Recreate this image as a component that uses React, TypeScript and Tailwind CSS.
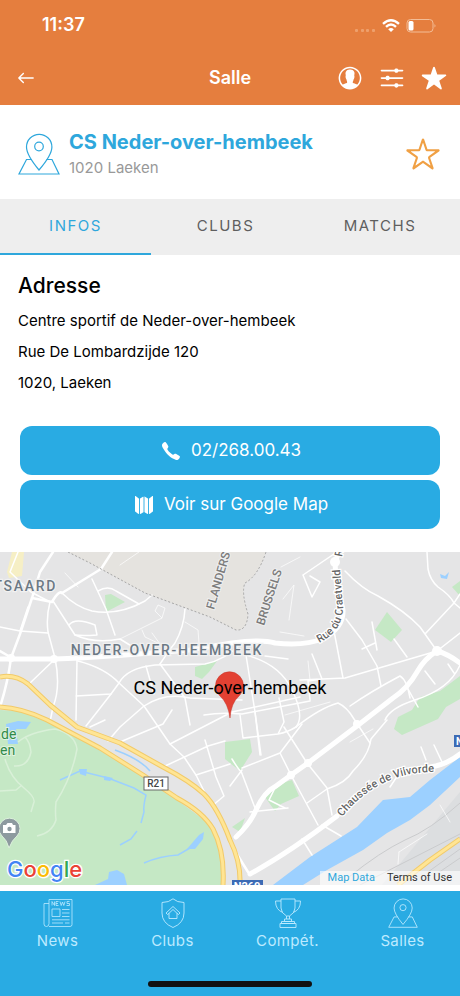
import { useState } from 'react'
import clsx from 'clsx'
import {
  IoIosArrowRoundBack,
  IoIosCall,
  IoIosContact,
  IoIosMap,
  IoIosOptions,
  IoIosStar,
  IoIosStarOutline,
} from 'react-icons/io'

const tabs = ['INFOS', 'CLUBS', 'MATCHS']

const addressLines = ['Centre sportif de Neder-over-hembeek', 'Rue De Lombardzijde 120', '1020, Laeken']

const navItems = [
  { label: 'News', icon: NewsIcon },
  { label: 'Clubs', icon: ShieldIcon },
  { label: 'Compét.', icon: TrophyIcon },
  { label: 'Salles', icon: VenueIcon },
]

// Map roads, grouped by stroke width
const mainRoads = [
  'M0 107 L55 107 L80 106 L125 103 L190 98 L232 91 Q262 87 275 91 Q305 94 322 87 Q344 76 343 58 L336 28 L335 10 L339 0',
  'M236 285 Q250 272 256 258 Q264 240 276 234 L291 223 L308 211 L357 174 L393 146 Q408 136 417 120 Q425 106 437 99 Q448 102 460 111',
  'M250 322 Q290 300 337 264 M430 215 Q446 213 460 202',
]

const mediumRoads = [
  'M62 41 L101 17 L112 0',
  'M230 291 L248 320',
  'M0 155 Q8 130 11 106 L20 82 L32 46 L40 20 L53 0',
  'M12 106 L0 99 M32 46 L52 50 Q59 38 62 41',
]

const smallRoads = [
  'M18 0 L10 20 L31 40 L50 50 Q46 65 48 80 Q52 95 55 106 Q61 135 53 155 L50 170',
  'M53 49 L75 83 Q95 92 120 87 L133 95',
  'M62 41 Q76 55 92 59 Q118 64 145 49 L152 43',
  'M92 27 L106 57 L115 83 M98 39 Q108 33 116 39 L139 52',
  'M0 75 L20 79 L48 81 M20 79 L28 55',
  'M69 73 Q75 65 95 73 L97 83 Q82 84 75 83',
  'M54 108 L30 131',
  'M77 108 L76 168 M76 144 L111 142 L119 131 Q127 116 155 113 L205 112 Q225 108 242 91',
  'M78 109 Q105 116 119 131 L144 154 L170 192 L184 205 L196 223 L211 253',
  'M146 114 L154 142 M160 112 L185 146 L190 173',
  'M111 142 L97 160 L86 174 M144 154 Q165 140 190 146 L242 148 M144 154 L120 175 L108 189',
  'M160 112 Q170 97 175 91 Q184 75 185 57',
  'M204 163 Q221 160 242 162 L310 149 M170 192 L232 160 L300 145',
  'M246 103 L255 160 L260 203 M246 103 Q280 112 292 138 Q305 164 296 175',
  'M265 104 L288 107 M312 102 L322 127 L308 129 L310 148 M300 128 L345 126 L437 99',
  'M334 79 L343 126 M346 67 L362 88 L377 114 L381 134',
  'M362 97 L375 91 M372 70 L377 98 M394 87 L407 105',
  'M345 19 Q362 37 378 44 Q405 59 420 75 L437 99 L460 81 M425 82 L454 51 L460 42',
  'M427 0 L428 17 Q430 28 438 35 Q450 43 454 51 L460 56',
  'M337 0 L303 23 M303 23 L312 45 L320 30 L310 24',
  'M350 154 Q370 140 400 124 Q407 128 410 146',
  'M408 137 L418 155 M385 168 Q390 156 415 148 Q450 137 460 113 M425 119 L435 132 M448 112 L454 121',
  'M296 175 Q320 156 338 151 Q347 155 354 167 L370 191',
  'M240 163 L243 186 L278 182 Q288 180 296 175 M278 182 L284 170 L279 146',
  'M255 160 L261 203 M242 216 L280 201 L302 172 M280 201 L291 223 L318 273',
  'M284 175 L307 211 L327 236 L332 263',
  'M307 251 L327 237 Q346 231 353 219 Q369 203 371 187 L387 168',
  'M232 207 Q240 220 241 219 L255 256 M230 234 L242 218',
  'M163 215 L208 194 L225 189 M196 223 L230 212 M205 188 L216 225 L224 244 L212 254',
  'M120 190 L163 172 L172 158 M90 175 L105 168',
  'M276 234 L269 248 L285 256 M322 273 L341 284 M302 287 L312 303',
  'M250 260 L288 256 M390 235 L400 220 M421 195 L426 208 M434 193 L442 210',
]

// thin paths inside the park and around the estates
const footpaths = [
  'M65 21 L78 35 M120 13 L139 0 M120 87 L162 66 L155 59 L158 53 L165 56 L162 66 M152 81 L160 92 L145 85 L142 78',
  'M185 70 L198 78 L199 91 M281 15 L300 5 M283 47 L294 33 L289 68 M280 80 L304 84',
  'M308 109 L310 128 M285 163 L330 150 M350 190 L373 177 M440 253 L450 270 M399 300 L398 312 M399 300 L427 282',
]

function VenueIcon({ className }: { className?: string }) {
  return (
    <svg viewBox="0 0 42 42" fill="none" stroke="currentColor" strokeWidth="1.2" className={className} aria-hidden="true">
      <path d="M21 37 Q8.500 22 8.500 14 A12.700 12.700 0 0 1 33.900 14 Q33.900 22 21 37 Z" />
      <circle cx="21" cy="13.500" r="4.300" />
      <path d="M13.500 26.500 H8.500 L1 41 H41 L34 26.500 H28.500" />
    </svg>
  )
}

function NewsIcon({ className }: { className?: string }) {
  return (
    <svg viewBox="0 0 30 30" fill="none" stroke="currentColor" strokeWidth="0.8" className={className} aria-hidden="true">
      <path d="M6 28.500 H27 Q29 28.500 29 26.500 V1.500 H6 V25.500 Q6 28.500 3.500 28.500 Q1 28.500 1 26 V5.500 H6" />
      <path d="M9 7.500 V3.500 L11.500 7.500 V3.500 M15.500 3.500 H13 V7.500 H15.500 M13 5.500 H15 M17 3.500 L18.200 7.500 L19.500 4 L20.800 7.500 L22 3.500 M26.500 3.500 H24 V5.500 H26.500 V7.500 H23.500" />
      <path d="M9 11 H17 V18.500 H9 Z M19 11.500 H26.500 M19 15 H26.500 M19 18.500 H26.500 M9 21.800 H26.500 M9 25 H20 M22 25 H26.500" />
    </svg>
  )
}

function ShieldIcon({ className }: { className?: string }) {
  return (
    <svg viewBox="0 0 30 30" fill="none" stroke="currentColor" strokeWidth="0.9" className={className} aria-hidden="true">
      <path d="M15 0.800 Q19 4.500 26 4.500 V15 Q26 25 15 29.500 Q4 25 4 15 V4.500 Q11 4.500 15 0.800 Z" />
      <path d="M15 8.500 L22 15 L20.500 16.500 L19 15.300 V20.500 H11 V15.300 L9.500 16.500 L8 15 Z M11 15.300 L15 11.500 L19 15.300" />
    </svg>
  )
}

function TrophyIcon({ className }: { className?: string }) {
  return (
    <svg viewBox="0 0 30 30" fill="none" stroke="currentColor" strokeWidth="0.9" className={className} aria-hidden="true">
      <path d="M8 1 H22 V10 Q22 15 16.500 18 H13.500 Q8 15 8 10 Z" />
      <path d="M8 3 H2.500 Q2.500 12 10 14.500 M22 3 H27.500 Q27.500 12 20 14.500" />
      <path d="M13.500 18 V21 M16.500 18 V21 M11.500 21 H18.500 V23.500 H11.500 Z M8.500 23.500 H21.500 V25.500 H8.500 Z M7 25.500 H23 V29.500 H7 Z" />
    </svg>
  )
}

function StatusIcons() {
  return (
    <svg viewBox="0 0 84 16" className="h-4 w-[84px]" aria-hidden="true">
      <g fill="#eea06c">
        <rect x="3" y="12" width="3" height="3" rx="1" />
        <rect x="9" y="12" width="3" height="3" rx="1" />
        <rect x="14" y="12" width="3" height="3" rx="1" />
        <rect x="20" y="12" width="3" height="3" rx="1" />
      </g>
      <g fill="none" stroke="#fff" strokeWidth="2.400">
        <path d="M31 6.800 Q39 -0.200 47 6.800" />
        <path d="M34 9.800 Q39 5.200 44 9.800" />
      </g>
      <path d="M36.200 12.200 Q39 9.800 41.800 12.200 L39 15 Z" fill="#fff" />
      <rect x="55" y="2.500" width="26" height="12.500" rx="3.500" fill="none" stroke="#f3bd97" />
      <path d="M82.500 7 Q84.500 8.800 82.500 10.600 Z" fill="#f3bd97" />
      <rect x="56.500" y="4" width="5" height="9.500" rx="1.500" fill="#fff" />
    </svg>
  )
}

function VenueMap() {
  return (
    <svg
      viewBox="0 0 460 333"
      preserveAspectRatio="xMidYMid slice"
      className="block h-[333px] w-full bg-[#e5e5e6]"
      fontFamily="Roboto, 'Liberation Sans', sans-serif"
      role="img"
      aria-label="CS Neder-over-hembeek"
    >
      <rect width="460" height="333" fill="#e5e5e6" />
      <path d="M68 0 L90 11 L145 41 L210 65 L236 78 Q247 79 248 62 Q241 40 245 31 Q258 24 266 0 Z" fill="#e5e3df" />
      <path d="M12 0 H24 L22 24 L9 26 L7 20 Z" fill="#f6efc5" />
      <path d="M382 333 L460 240 V333 Z" fill="#dcdee0" />

      {/* parks */}
      <g fill="#c5e8c5">
        <path d="M0 158 L20 159 L47 170 L100 198 L143 225 L177 248 L207 270 L219 292 L222 315 L221 333 H0 Z" />
        <path d="M105 43 L111 42 L125 50 L106 60 Z" />
        <path d="M195 115 L217 109 L209 120 L202 127 L195 124 Z" />
        <path d="M387 60 L402 78 L391 90 L375 78 Z" />
        <path d="M452 35 L460 29 V44 Z" />
        <path d="M460 124 L440 139 L420 145 L412 158 L398 165 L394 177 L402 183 L438 167 L446 155 L460 147 Z" />
        <path d="M225 190 L250 187 L252 200 L240 219 L225 207 Z" />
        <path d="M265 245 L285 230 L292 228 L299 244 L281 252 L275 259 Z" />
        <path d="M232 275 L245 266 L240 280 Z" />
      </g>

      {/* water */}
      <g fill="#9cd0ff">
        <path d="M273 333 L310 305 L357 275 L383 248 L410 245 L430 228 L443 218 L460 205 V225 L430 253 L410 268 L387 281 L363 298 L327 318 L303 333 Z" />
        <path d="M6 172 L18 169 L31 170 L26 177 L16 177 L18 192 L8 192 Z" />
        <path d="M95 333 L108 327 L109 320 L117 318 L124 322 L127 333 Z M187 297 L199 283 L204 280 L203 287 L195 297 Z" />
        <path d="M79 217 L87 217 L86 224 L80 222 Z M104 224 L113 226 L110 229 L104 228 Z" />
        <path d="M440 22 L445 24 L449 20 L447 27 L441 26 Z" />
      </g>
      <g fill="none" stroke="#9cd0ff" strokeWidth="1.500">
        <path d="M60 228 L80 219 L108 226 L134 236 L146 243 Q143 255 144 260 L141 271 M137 279 L131 287 L120 293" />
        <path d="M144 311 Q160 304 178 303 L190 296 M115 198 Q140 207 150 219" />
      </g>

      <g fill="none" stroke="#d9f0d8" strokeWidth="1.500">
        <path d="M18 190 Q30 180 55 177 Q75 182 77 197 Q72 225 56 250 Q55 260 56 268 Q52 281 37 284" />
        <path d="M5 207 Q10 225 24 236 Q35 245 34 250 L31 260 M0 239 L16 238 L22 233 M14 214 Q28 215 31 200 Q30 190 25 185" />
      </g>

      {/* railway yard */}
      <g fill="none" stroke="#cacbcd" strokeWidth="1">
        <path d="M349 325 Q380 300 405 288 Q430 278 460 251 M360 333 L460 282 M423 315 L460 285 M428 320 L460 297 M435 323 L460 306" />
      </g>

      <g fill="none" stroke="#fff" strokeLinecap="round" strokeLinejoin="round">
        {footpaths.map((d) => (
          <path key={d} d={d} strokeWidth="1" strokeOpacity="0.7" />
        ))}
        {smallRoads.map((d) => (
          <path key={d} d={d} strokeWidth="1.500" />
        ))}
        {mediumRoads.map((d) => (
          <path key={d} d={d} strokeWidth="2.500" />
        ))}
        {mainRoads.map((d) => (
          <path key={d} d={d} strokeWidth="5" />
        ))}
      </g>
      <g fill="#fff">
        <circle cx="11" cy="106" r="4" />
        <circle cx="54" cy="107" r="4" />
        <circle cx="335" cy="10" r="5" />
        <circle cx="437" cy="99" r="5" />
        <circle cx="291" cy="223" r="4" />
        <circle cx="308" cy="211" r="4" />
        <circle cx="357" cy="172" r="4" />
      </g>

      <path d="M68 0 L90 11 L145 41 L210 65 L236 78 Q247 79 248 62 Q241 40 245 31 Q258 24 266 0" fill="none" stroke="#a5a5a5" strokeDasharray="2 2" />

      {/* motorway ring */}
      <g fill="none" strokeLinejoin="round">
        <g stroke="#f2ca69" strokeWidth="5">
          <path d="M0 125 Q15 122 28 132 L50 153 L77 175 L120 191 L163 215 Q190 229 204 242 Q218 256 230 288 Q241 310 240 333" />
          <path d="M0 155 Q22 156 47 168 L100 196 L143 223 L177 246 Q203 260 213 277 Q225 300 223 333" />
          <path d="M398 333 L430 308 L460 287" />
        </g>
        <g stroke="#ffe594" strokeWidth="3">
          <path d="M0 125 Q15 122 28 132 L50 153 L77 175 L120 191 L163 215 Q190 229 204 242 Q218 256 230 288 Q241 310 240 333" />
          <path d="M0 155 Q22 156 47 168 L100 196 L143 223 L177 246 Q203 260 213 277 Q225 300 223 333" />
          <path d="M398 333 L430 308 L460 287" />
        </g>
      </g>

      {/* road shields */}
      <rect x="144" y="225" width="24" height="13" fill="#fff" stroke="#6b6b6b" />
      <text x="156" y="235" textAnchor="middle" fontSize="10" fontWeight="500" fill="#444">R21</text>
      <rect x="454" y="183" width="12" height="12" fill="#3c6bb5" />
      <text x="456" y="193" fontSize="10" fontWeight="700" fill="#fff">N</text>
      <rect x="232" y="328" width="31" height="12" fill="#3c6bb5" />
      <text x="247" y="338" textAnchor="middle" fontSize="11" fontWeight="700" fill="#fff">N260</text>

      {/* place names */}
      <g fill="#6c7985" stroke="#f1f1f1" strokeWidth="2.500" paintOrder="stroke" fontWeight="500" fontSize="14" letterSpacing="1.700">
        <text x="57" y="39" textAnchor="end">TSAARD</text>
        <text x="167" y="103" textAnchor="middle">NEDER-OVER-HEEMBEEK</text>
      </g>
      <g fill="#7b7b7b" stroke="#efefef" strokeWidth="2" paintOrder="stroke" fontSize="12" fontWeight="500">
        <text transform="translate(214 58) rotate(-74)">FLANDERS</text>
        <text transform="translate(264 74) rotate(-72)">BRUSSELS</text>
      </g>
      <defs>
        <path id="craetveld" d="M319 91 Q343 79 343 55 L339 5" />
        <path id="vilvorde" d="M342 265 Q378 220 434 220" />
      </defs>
      <g fill="#666" stroke="#fff" strokeWidth="2.500" paintOrder="stroke" fontSize="11" fontWeight="500">
        <text>
          <textPath href="#craetveld">Rue du Craetveld</textPath>
        </text>
        <text transform="translate(342 5) rotate(-80)">R</text>
        <text>
          <textPath href="#vilvorde">Chaussée de Vilvorde</textPath>
        </text>
      </g>
      <g fill="#308a4b" stroke="#e0f2df" strokeWidth="2" paintOrder="stroke" fontSize="14">
        <text x="1" y="187">de</text>
        <text x="0" y="203">en</text>
      </g>

      {/* photo spot */}
      <path d="M9 296 Q7 288 2 284 A10.500 10.500 0 1 1 17 284 Q12 288 9 296 Z" fill="#8d9a9f" stroke="#dcefdc" />
      <path d="M3 273 H6 L7.500 271 H12 L13 273 H15.500 V281 H3 Z" fill="#fff" />
      <circle cx="9.500" cy="277" r="2.200" fill="#8d9a9f" />

      {/* venue marker */}
      <path d="M230 166 Q228 151 220 144 A14 14 0 1 1 239 144 Q231 151 230 166 Z" fill="#e34133" stroke="#c5352a" strokeWidth="0.500" />
      <text x="230" y="142" textAnchor="middle" fontSize="18" fill="#000">CS Neder-over-hembeek</text>

      <text x="7" y="325" fontSize="22" fontWeight="500" fontFamily="Inter, sans-serif" stroke="#fff" strokeWidth="2.500" paintOrder="stroke">
        <tspan fill="#4285f4">G</tspan>
        <tspan fill="#ea4335">o</tspan>
        <tspan fill="#fbbc05">o</tspan>
        <tspan fill="#4285f4">g</tspan>
        <tspan fill="#34a853">l</tspan>
        <tspan fill="#ea4335">e</tspan>
      </text>
    </svg>
  )
}

function App() {
  const [activeTab, setActiveTab] = useState('INFOS')
  const [isFavorite, setIsFavorite] = useState(false)

  return (
    <div className="flex min-h-screen flex-col bg-white font-['Inter','Liberation_Sans',sans-serif] text-black">
      <header className="bg-[#e57e3e] text-white">
        <div className="flex h-[50px] items-center justify-between pr-6 pl-[42px]">
          <span className="text-lg font-semibold">11:37</span>
          <StatusIcons />
        </div>
        <div className="grid h-[55px] grid-cols-[1fr_auto_1fr] items-center px-3">
          <button type="button" aria-label="Retour" className="w-7">
            <IoIosArrowRoundBack className="size-7" />
          </button>
          <h1 className="text-lg font-semibold">Salle</h1>
          <div className="flex justify-end gap-[14px]">
            <button type="button" aria-label="Profil">
              <IoIosContact className="size-7" />
            </button>
            <button type="button" aria-label="Options">
              <IoIosOptions className="size-7" />
            </button>
            <button type="button" aria-label="Favoris">
              <IoIosStar className="size-7" />
            </button>
          </div>
        </div>
      </header>

      <main className="flex flex-1 flex-col">
        <section className="flex h-[94px] items-center gap-[9px] px-[18px] pt-1">
          <VenueIcon className="size-[42px] text-[#2ea7dc]" />
          <div className="flex-1">
            <h2 className="text-xl leading-7 font-bold text-[#2ea7dc]">CS Neder-over-hembeek</h2>
            <p className="text-[15px] leading-6 text-[#999]">1020 Laeken</p>
          </div>
          <button
            type="button"
            aria-label="Ajouter aux favoris"
            aria-pressed={isFavorite}
            onClick={() => setIsFavorite((prev) => !prev)}
            className="text-[#f0a044]"
          >
            {isFavorite ? <IoIosStar className="size-[38px]" /> : <IoIosStarOutline className="size-[38px]" />}
          </button>
        </section>

        <div role="tablist" className="grid h-14 grid-cols-[151fr_149fr_160fr] bg-[#eee]">
          {tabs.map((tab) => (
            <button
              key={tab}
              type="button"
              role="tab"
              aria-selected={activeTab === tab}
              onClick={() => setActiveTab(tab)}
              className={clsx(
                'border-b-2 text-[15px] tracking-widest',
                activeTab === tab ? 'border-[#2ea7dc] text-[#2ea7dc]' : 'border-transparent text-[#5f5f5f]'
              )}
            >
              {tab}
            </button>
          ))}
        </div>

        <section className="px-[18px] pt-4">
          <h3 className="text-[21px] leading-[30px] font-medium">Adresse</h3>
          <div className="pt-1">
            {addressLines.map((line) => (
              <p key={line} className="text-[15px] leading-[31px]">
                {line}
              </p>
            ))}
          </div>
        </section>

        <div className="flex flex-col gap-[5px] px-5 pt-7 pb-[23px] text-[17px] text-white">
          <a href="tel:022680043" className="flex h-[49px] items-center justify-center gap-2 rounded-xl bg-[#29abe3]">
            <IoIosCall className="size-6" />
            02/268.00.43
          </a>
          <a href="#map" className="flex h-[49px] items-center justify-center gap-2 rounded-xl bg-[#29abe3]">
            <IoIosMap className="size-6" />
            Voir sur Google Map
          </a>
        </div>

        <div id="map" className="relative">
          <VenueMap />
          <div className="absolute right-0 bottom-0 flex gap-3 bg-white/60 px-2 font-['Roboto','Liberation_Sans',sans-serif] text-[11px] leading-[14px]">
            <a href="#map-data" className="text-[#2ea7dc]">Map Data</a>
            <a href="#terms" className="text-[#333]">Terms of Use</a>
          </div>
        </div>
      </main>

      <footer className="bg-[#29abe3] pt-[7px] text-[#bdeaff]">
        <nav className="grid grid-cols-4">
          {navItems.map(({ label, icon: Icon }) => (
            <a key={label} href={`#${label.toLowerCase()}`} className="flex flex-col items-center gap-[3px]">
              <Icon className="size-[30px]" />
              <span className="text-[15px] leading-5 tracking-wide">{label}</span>
            </a>
          ))}
        </nav>
        <div className="mx-auto mt-[30px] mb-[9px] h-[6px] w-[164px] rounded-full bg-[#111]" />
      </footer>
    </div>
  )
}

export default App
